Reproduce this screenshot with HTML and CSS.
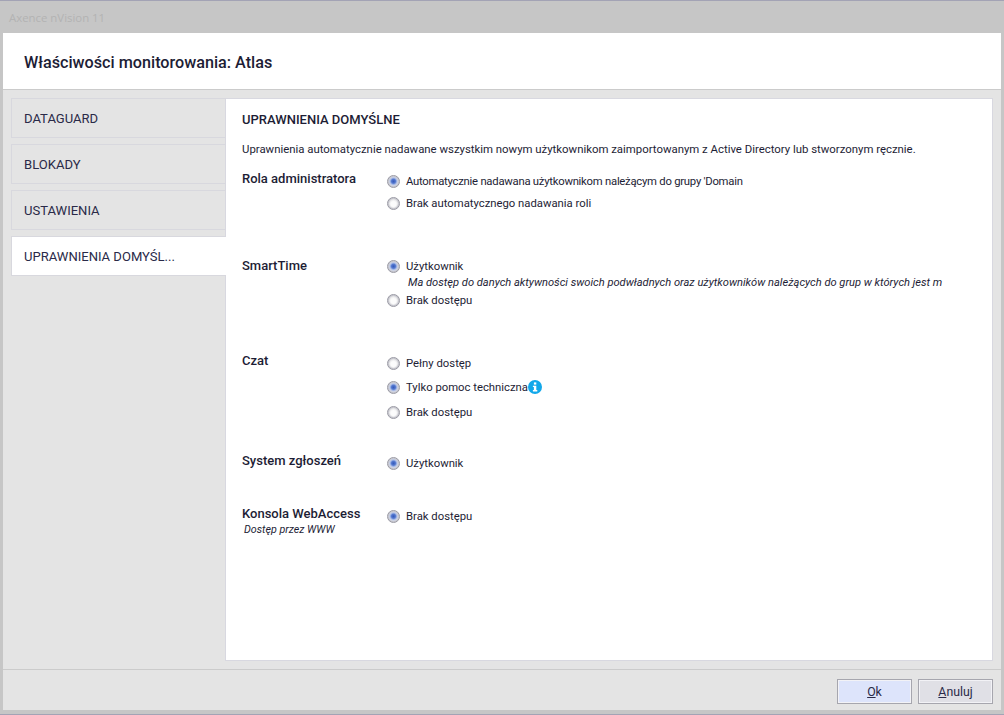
FILE: index.html
```html
<!DOCTYPE html>
<html lang="pl">
<head>
<meta charset="utf-8">
<title>Axence nVision 11</title>
<link rel="stylesheet" href="styles.css">
</head>
<body>
<div class="window">
  <div class="titlebar">Axence nVision 11</div>
  <div class="dialog">
    <header class="dialog-header">Właściwości monitorowania: Atlas</header>
    <div class="dialog-body">
      <nav class="tabs">
        <div class="tab">DATAGUARD</div>
        <div class="tab">BLOKADY</div>
        <div class="tab">USTAWIENIA</div>
        <div class="tab tab-active">UPRAWNIENIA DOMYŚL...</div>
      </nav>
      <main class="panel">
        <h2 class="panel-title">UPRAWNIENIA DOMYŚLNE</h2>
        <p class="panel-desc">Uprawnienia automatycznie nadawane wszystkim nowym użytkownikom zaimportowanym z Active Directory lub stworzonym ręcznie.</p>

        <section class="perm perm-role">
          <div class="perm-label">Rola administratora</div>
          <div class="perm-options">
            <div class="option option-tight"><span class="radio radio-on"></span>Automatycznie nadawana użytkownikom należącym do grupy 'Domain</div>
            <div class="option"><span class="radio"></span>Brak automatycznego nadawania roli</div>
          </div>
        </section>

        <section class="perm perm-smart">
          <div class="perm-label perm-label-low">SmartTime</div>
          <div class="perm-options">
            <div class="option"><span class="radio radio-on"></span>Użytkownik</div>
            <div class="option-note">Ma dostęp do danych aktywności swoich podwładnych oraz użytkowników należących do grup w których jest m</div>
            <div class="option"><span class="radio"></span>Brak dostępu</div>
          </div>
        </section>

        <section class="perm perm-chat">
          <div class="perm-label">Czat</div>
          <div class="perm-options perm-options-gap">
            <div class="option"><span class="radio"></span>Pełny dostęp</div>
            <div class="option"><span class="radio radio-on"></span>Tylko pomoc techniczna<svg class="info" viewBox="0 0 14 14" width="14" height="14" aria-hidden="true"><circle cx="7" cy="7" r="7" fill="#12a8ea"/><rect x="5.9" y="2.4" width="2.4" height="2.2" fill="#fff"/><path d="M4.9 5.7h3.4v4.4h1v1.4H4.9v-1.4h1V7.1h-1z" fill="#fff"/></svg></div>
            <div class="option"><span class="radio"></span>Brak dostępu</div>
          </div>
        </section>

        <section class="perm perm-tickets">
          <div class="perm-label">System zgłoszeń</div>
          <div class="perm-options">
            <div class="option"><span class="radio radio-on"></span>Użytkownik</div>
          </div>
        </section>

        <section class="perm">
          <div class="perm-label">Konsola WebAccess<div class="perm-sub">Dostęp przez WWW</div></div>
          <div class="perm-options">
            <div class="option"><span class="radio radio-on"></span>Brak dostępu</div>
          </div>
        </section>
      </main>
    </div>
    <footer class="dialog-footer">
      <button class="btn btn-primary" type="button"><u>O</u>k</button>
      <button class="btn" type="button"><u>A</u>nuluj</button>
    </footer>
  </div>
</div>
</body>
</html>
```

FILE: styles.css
```css
* { box-sizing: border-box; }
html, body { margin: 0; padding: 0; }
body {
  width: 1004px;
  height: 715px;
  overflow: hidden;
  font-family: Roboto, "Liberation Sans", sans-serif;
  color: #1d1d35;
  background: #c6c6c6;
}
.window {
  height: 715px;
  display: flex;
  flex-direction: column;
  border-top: 1px solid #a3a3b5;
  border-bottom: 1px solid #a3a3b5;
  padding: 0 3px 4px;
}
.titlebar {
  height: 32px;
  flex: none;
  padding-left: 6px;
  font-family: "Open Sans", sans-serif;
  font-size: 11.4px;
  line-height: 33px;
  color: #b3b3b3;
}
.dialog {
  flex: 1;
  min-height: 0;
  display: flex;
  flex-direction: column;
  background: #e4e4e4;
}
.dialog-header {
  height: 57px;
  flex: none;
  padding-left: 21px;
  background: #fff;
  border-bottom: 1px solid #cbcbcb;
  font-size: 16.2px;
  font-weight: 500;
  line-height: 56px;
  padding-top: 2px;
}
.dialog-body {
  flex: 1;
  min-height: 0;
  display: flex;
  padding: 8px;
  border-bottom: 1px solid #cbcbcb;
}
.tabs {
  width: 215px;
  flex: none;
  display: flex;
  flex-direction: column;
  gap: 6px;
  position: relative;
  z-index: 1;
}
.tab {
  height: 40px;
  padding-left: 12px;
  border: 1px solid #d8d8de;
  border-right: 0;
  font-size: 13.05px;
  line-height: 38px;
  padding-top: 1px;
  color: #2a2a48;
}
.tab-active {
  background: #fff;
}
.panel {
  flex: 1;
  min-width: 0;
  margin-left: -1px;
  padding: 0 16px;
  background: #fff;
  border: 1px solid #d8d8e0;
  overflow: hidden;
}
.panel-title {
  margin: 13px 0 0;
  font-size: 13px;
  font-weight: 500;
  line-height: 16px;
}
.panel-desc {
  margin: 14px 0 0;
  font-size: 11.38px;
  line-height: 14px;
  white-space: nowrap;
}
.perm {
  display: flex;
}
.perm-role { height: 85px; margin-top: 14px; }
.perm-smart { height: 97px; }
.perm-chat { height: 100px; }
.perm-tickets { height: 53px; }
.perm-label {
  width: 144px;
  flex: none;
  padding-top: 1px;
  font-size: 13px;
  font-weight: 500;
  line-height: 16px;
}
.perm-label-low { padding-top: 3px; }
.perm-sub {
  margin: 1px 0 0 2px;
  font-size: 10.7px;
  font-style: italic;
  font-weight: 400;
  line-height: 14px;
}
.perm-options {
  min-width: 0;
  flex: 1;
  display: flex;
  flex-direction: column;
}
.perm-options-gap { gap: 2px; }
.perm-options-gap .option:last-child { margin-top: 1px; }
.option {
  height: 22px;
  display: flex;
  align-items: center;
  font-size: 11.3px;
  white-space: nowrap;
}
.option-tight { letter-spacing: -0.25px; }
.option-note {
  height: 12px;
  margin-left: 22px;
  font-size: 11.12px;
  font-style: italic;
  line-height: 12px;
  white-space: nowrap;
}
.radio {
  width: 13px;
  height: 13px;
  flex: none;
  margin: 0 6px 0 1px;
  border-radius: 50%;
  border: 1px solid #9a9aa4;
  box-shadow: inset 0 0 1px 1px #c4c4cc;
  background: radial-gradient(circle at 50% 55%, #fcfcfc 30%, #e6e6e8 62%, #bcbcc2 100%);
}
.radio-on {
  background: radial-gradient(circle at 50% 48%, #3557b8 0, #557ad0 26%, #a9bae6 42%, #e0e3ec 60%, #bcbcc6 100%);
}
.info { flex: none; }
.dialog-footer {
  height: 40px;
  flex: none;
  display: flex;
  justify-content: flex-end;
  gap: 6px;
  padding: 9px 8px 0 0;
}
.btn {
  width: 75px;
  height: 25px;
  padding: 0;
  border: 1px solid #a6a6ae;
  box-shadow: inset 0 0 0 1px #f2f2f6;
  background: #e0e0e6;
  font-family: Roboto, sans-serif;
  font-size: 12.3px;
  color: #2a2a48;
}
.btn-primary { background: #dde4fb; }
```
